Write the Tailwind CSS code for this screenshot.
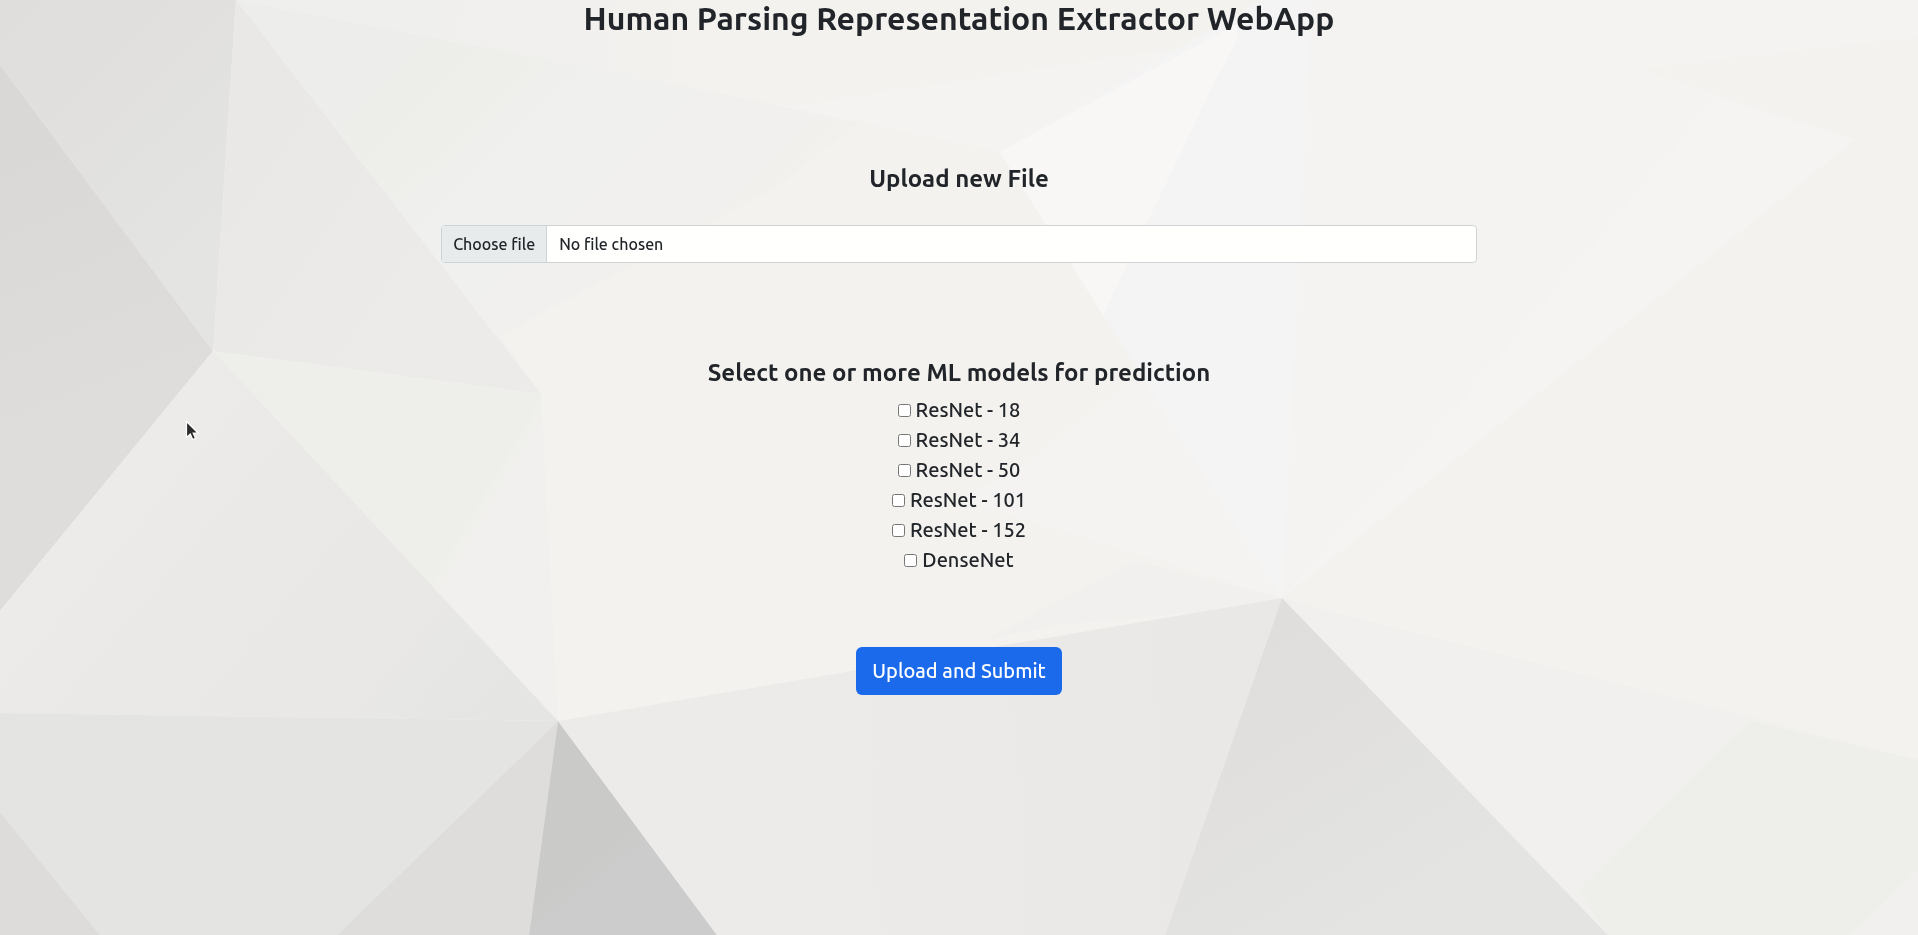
<!DOCTYPE html>
<html lang="en">
<head>
<meta charset="utf-8">
<meta name="viewport" content="width=device-width, initial-scale=1">
<title>Human Parsing Representation Extractor WebApp</title>
<script src="https://cdn.jsdelivr.net/npm/@tailwindcss/browser@4"></script>
</head>
<body class="relative min-h-screen overflow-x-hidden bg-[#f2f1ee] font-['Ubuntu','Noto_Sans',sans-serif] text-xl leading-[30px] font-medium text-[#212529]">
<!-- Low-poly backdrop, scaled to cover the window -->
<svg class="fixed inset-0 -z-10 h-full w-full" viewBox="0 0 1918 935" preserveAspectRatio="xMidYMid slice" aria-hidden="true">
  <defs>
    <linearGradient id="topleft" gradientUnits="userSpaceOnUse" x1="20" y1="20" x2="230" y2="240"><stop offset="0" stop-color="#dfdedc"/><stop offset="1" stop-color="#e4e4e2"/></linearGradient>
    <linearGradient id="left" gradientUnits="userSpaceOnUse" x1="0" y1="120" x2="120" y2="420"><stop offset="0" stop-color="#d9d8d6"/><stop offset="1" stop-color="#dedddb"/></linearGradient>
    <linearGradient id="inner" gradientUnits="userSpaceOnUse" x1="220" y1="150" x2="450" y2="300"><stop offset="0" stop-color="#e9e8e6"/><stop offset="1" stop-color="#ecebe9"/></linearGradient>
    <linearGradient id="mist" gradientUnits="userSpaceOnUse" x1="400" y1="480" x2="500" y2="540"><stop offset="0" stop-color="#eeefea"/><stop offset=".65" stop-color="#eeefea"/><stop offset=".8" stop-color="#f1f0ee"/></linearGradient>
    <linearGradient id="mid" gradientUnits="userSpaceOnUse" x1="120" y1="480" x2="440" y2="750"><stop offset="0" stop-color="#ecebe9"/><stop offset=".3" stop-color="#eae9e7"/><stop offset=".75" stop-color="#e9e8e6"/><stop offset="1" stop-color="#e5e6e4"/></linearGradient>
    <linearGradient id="shade" gradientUnits="userSpaceOnUse" x1="540" y1="760" x2="650" y2="900"><stop offset="0" stop-color="#cacac8"/><stop offset=".55" stop-color="#cacac8"/><stop offset=".75" stop-color="#cccccc"/></linearGradient>
    <linearGradient id="floor" gradientUnits="userSpaceOnUse" x1="1250" y1="720" x2="760" y2="740"><stop offset="0" stop-color="#e9e8e6"/><stop offset="1" stop-color="#ecebe9"/></linearGradient>
    <linearGradient id="peak" gradientUnits="userSpaceOnUse" x1="1280" y1="640" x2="1440" y2="900"><stop offset="0" stop-color="#dfdedc"/><stop offset="1" stop-color="#e4e4e2"/></linearGradient>
    <linearGradient id="upper" gradientUnits="userSpaceOnUse" x1="330" y1="60" x2="640" y2="380"><stop offset="0" stop-color="#ededeb"/><stop offset=".25" stop-color="#eeefeb"/><stop offset=".45" stop-color="#f0f0ee"/><stop offset=".8" stop-color="#f1f0ee"/><stop offset="1" stop-color="#f2f1ed"/></linearGradient>
    <linearGradient id="crest" gradientUnits="userSpaceOnUse" x1="300" y1="0" x2="1000" y2="60"><stop offset="0" stop-color="#efefed"/><stop offset=".4" stop-color="#f1f0ee"/><stop offset=".6" stop-color="#f3f2ee"/><stop offset="1" stop-color="#f3f2ef"/></linearGradient>
  </defs>
  <path fill="#f3f2ee" d="M0 0H1918V935H0Z"/>
  <path fill="url(#crest)" d="M236 0H1262L1000 152 640 77Z"/>
  <path fill="#f4f3f1" d="M750 112 1190 46 1000 152Z"/>
  <path fill="url(#upper)" d="M236 0 640 77 1000 152 541 394Z"/>
  <path fill="#f3f2ee" d="M500 336 780 185 860 122 1000 152 1282 598 558 721 541 394Z"/>
  <path fill="#f4f3f1" d="M1140 374 1030 460 960 500 1282 598Z"/>
  <path fill="#f1f0ee" d="M1135 561 1282 598 1200 612 1060 625 985 640Z"/>
  <path fill="#f4f3f1" d="M1312 0H1918V37L1640 69 1855 140 1282 598Z"/>
  <path fill="#f5f4f2" d="M1718 98 1855 140 1282 598 1430 440Z"/>
  <path fill="#f5f4f5" d="M1262 0H1312L1282 598 1000 152Z"/>
  <path fill="#f8f7f5" d="M1237 24V40L1213 85 1146 225 1103 315 1000 152Z"/>
  <path fill="#f1f0ee" d="M1282 598 1345 615 1918 760V935H1608Z"/>
  <path fill="#eeefea" d="M1750 721 1918 760V870L1850 935H1608L1578 890Z"/>
  <path fill="url(#topleft)" d="M0 0H236L213 351 0 65Z"/>
  <path fill="url(#left)" d="M0 65 213 351 0 611Z"/>
  <path fill="url(#inner)" d="M236 0 541 394 213 351Z"/>
  <path fill="url(#mist)" d="M213 351 541 394 558 721Z"/>
  <path fill="url(#mid)" d="M213 351 558 721 0 713V611Z"/>
  <path fill="#e4e4e2" d="M0 713 558 721 337 935H100L0 812Z"/>
  <path fill="#dddcda" d="M0 812 100 935H0Z"/>
  <path fill="#dedddb" d="M558 721 529 935H337Z"/>
  <path fill="url(#shade)" d="M558 721 717 935H529Z"/>
  <path fill="url(#floor)" d="M558 721 1282 598 1165 935H717Z"/>
  <path fill="url(#peak)" d="M1282 598 1608 935H1165Z"/>
</svg>

<main class="flex flex-col items-center">
  <h1 class="text-center text-[32px] leading-9 font-semibold">Human Parsing Representation Extractor WebApp</h1>

  <form class="mt-32 flex w-full flex-col items-center" onsubmit="return false">
    <h2 class="text-2xl leading-[29px] font-semibold">Upload new File</h2>
    <label class="mt-8 flex h-[38px] w-[54%] cursor-pointer overflow-hidden rounded border border-[#ced4d6] bg-[#fffffe] text-base leading-6 focus-within:ring-4 focus-within:ring-blue-200">
      <input type="file" name="file" class="sr-only" aria-label="Upload new File">
      <span class="flex items-center border-r border-[#ced4d6] bg-[#e7ebec] px-[11px]">Choose file</span>
      <span class="flex items-center px-3">No file chosen</span>
    </label>

    <fieldset class="mt-[95px] flex flex-col items-center">
      <legend class="mb-2 text-center text-2xl leading-[29px] font-semibold">Select one or more ML models for prediction</legend>
      <label class="flex items-center gap-[5px]"><input type="checkbox" name="model" value="resnet18" class="size-[13px]">ResNet - 18</label>
      <label class="flex items-center gap-[5px]"><input type="checkbox" name="model" value="resnet34" class="size-[13px]">ResNet - 34</label>
      <label class="flex items-center gap-[5px]"><input type="checkbox" name="model" value="resnet50" class="size-[13px]">ResNet - 50</label>
      <label class="flex items-center gap-[5px]"><input type="checkbox" name="model" value="resnet101" class="size-[13px]">ResNet - 101</label>
      <label class="flex items-center gap-[5px]"><input type="checkbox" name="model" value="resnet152" class="size-[13px]">ResNet - 152</label>
      <label class="flex items-center gap-[5px]"><input type="checkbox" name="model" value="densenet" class="size-[13px]">DenseNet</label>
    </fieldset>

    <button type="submit" class="mt-[72px] h-12 cursor-pointer rounded-md bg-[#1b6aec] px-4 text-white hover:bg-blue-700">Upload and Submit</button>
  </form>
</main>

<!-- Mouse pointer -->
<svg class="pointer-events-none absolute top-[420px] left-[185px] h-[21px] w-[16px]" viewBox="0 0 16 21" aria-hidden="true">
  <path d="M1.500 1.500V17.500L5.300 14 7.700 19.500 10.500 18.300 8.200 13H13Z" fill="#2b2b2b" stroke="#fff" stroke-width="1.200"/>
</svg>
</body>
</html>
